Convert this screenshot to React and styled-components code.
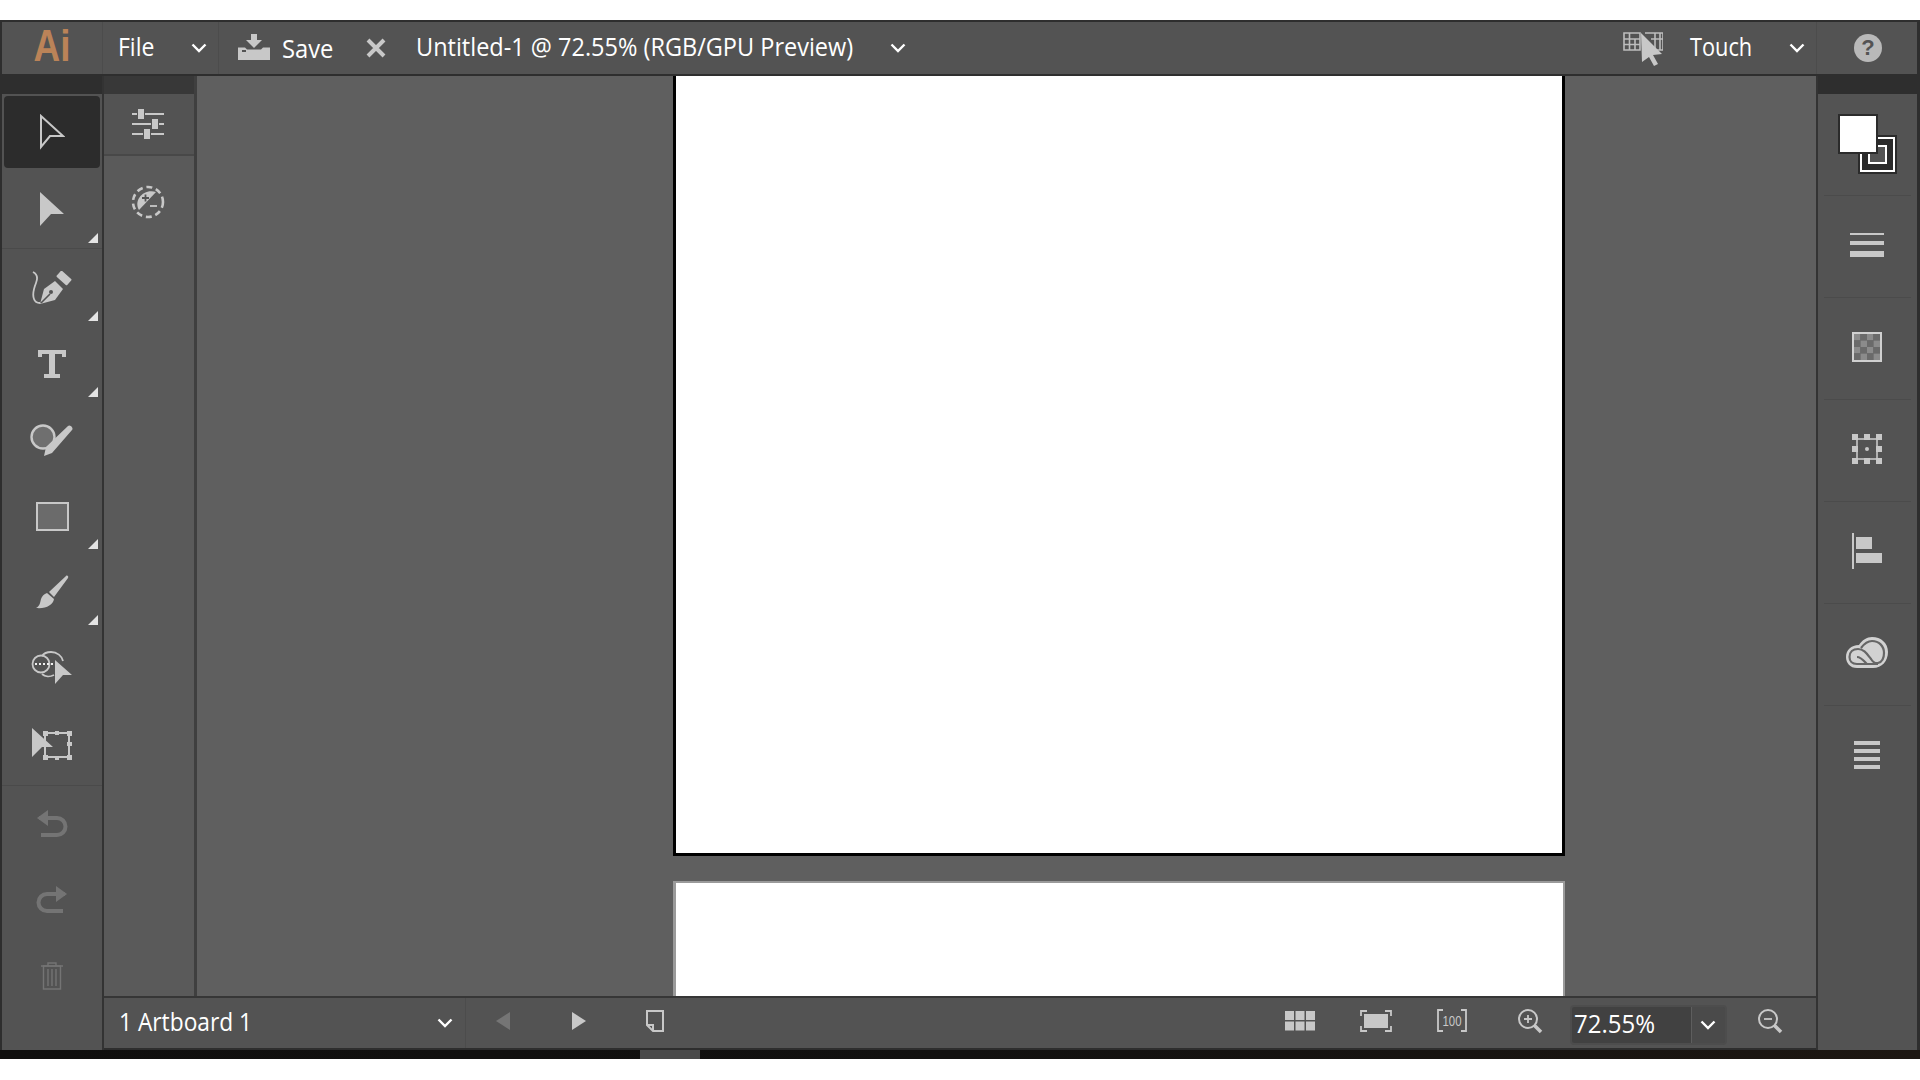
import styled, { createGlobalStyle } from "styled-components"

const light = "#c8c8c8"
const dim = "#747474"

const GlobalStyle = createGlobalStyle`
    html, body {
        margin : 0;
        padding : 0;
        background : #ffffff;
        overflow : hidden;
    }
    body {
        font-family : "Open Sans", "Noto Sans", sans-serif;
    }
`

const Page = styled.div`
    width : 1920px;
    height : 1080px;
    padding-top : 20px;
    box-sizing : border-box;
    background : #ffffff;
`
const Window = styled.div`
    display : grid;
    grid-template-columns : 104px 1fr 104px;
    grid-template-rows : 56px 974px 9px;
    height : 1039px;
    background : #2e2e2e;
`

/* top bar */
const TopBar = styled.header`
    grid-column : 1 / 4;
    display : flex;
    align-items : stretch;
    margin : 2px 3px 2px 2px;
    background : #535353;
    color : #ffffff;
`
const LogoCell = styled.div`
    width : 101px;
    display : flex;
    justify-content : center;
    align-items : center;
    border-right : 1px solid #4c4c4c;
    box-sizing : border-box;
    overflow : hidden;
`
const Logo = styled.span`
    font-family : "Liberation Sans", sans-serif;
    font-weight : 700;
    font-size : 44px;
    line-height : 1;
    color : #bb8358;
    transform : scaleX(.84);
    margin-top : -4px;
`
const Segment = styled.div`
    display : flex;
    align-items : center;
    width : ${props => props.width}px;
    padding-left : ${props => props.pad || 0}px;
    box-sizing : border-box;
    border-right : ${props => props.noline ? "none" : "1px solid #4c4c4c"};
    flex : ${props => props.grow ? "1" : "none"};
    position : relative;
`
const Label = styled.span`
    display : inline-block;
    font-size : 25px;
    line-height : 1;
    white-space : nowrap;
    color : #ffffff;
    transform : translateY(${props => props.raise || 0}px) scaleX(${props => props.squeeze || .85});
    transform-origin : left center;
    width : ${props => props.width}px;
    flex : none;
    margin-left : ${props => props.left || 0}px;
`
const Spacer = styled.div`
    flex : ${props => props.size ? "none" : "1"};
    width : ${props => props.size ? props.size + "px" : "auto"};
`
const HelpBadge = styled.div`
    width : 28px;
    height : 28px;
    border-radius : 50%;
    background : #b9b9b9;
    color : #535353;
    font-family : "Liberation Sans", sans-serif;
    font-weight : 700;
    font-size : 22px;
    line-height : 28px;
    text-align : center;
`
const Glyph = styled.svg`
    display : block;
    flex : none;
    margin-left : ${props => props.left || 0}px;
    margin-top : ${props => props.top || 0}px;
`

/* left tools */
const ToolColumn = styled.aside`
    grid-row : 2;
    display : flex;
    flex-direction : column;
    margin-left : 2px;
    background : #535353;
    border-right : 2px solid #333333;
    position : relative;
`
const DarkStrip = styled.div`
    height : 18px;
    flex : none;
    background : ${props => props.color || "#2e2e2e"};
`
const ToolGroup = styled.div`
    display : flex;
    flex-direction : column;
    padding-top : ${props => props.top || 0}px;
    border-bottom : ${props => props.line ? "1px solid #4a4a4a" : "none"};
`
const Tool = styled.div`
    height : ${props => props.height || 76}px;
    display : flex;
    justify-content : center;
    align-items : center;
    position : relative;
    box-sizing : border-box;
    &::before {
        content : "";
        display : ${props => props.active ? "block" : "none"};
        position : absolute;
        left : 2px;
        right : 2px;
        top : 2px;
        bottom : 2px;
        background : #2c2c2c;
        border-radius : 4px;
    }
    &::after {
        content : "";
        display : ${props => props.corner ? "block" : "none"};
        position : absolute;
        right : 4px;
        bottom : 5px;
        width : 0;
        height : 0;
        border-left : 10px solid transparent;
        border-bottom : 10px solid #e4e4e4;
    }
    svg {
        position : relative;
        z-index : 1;
    }
`

/* middle */
const Middle = styled.div`
    grid-row : 2;
    display : flex;
    flex-direction : column;
    min-width : 0;
`
const Work = styled.div`
    display : flex;
    height : 920px;
    flex : none;
`
const Panel = styled.div`
    width : 93px;
    flex : none;
    display : flex;
    flex-direction : column;
    background : #5a5a5a;
    border-right : 3px solid #3f3f3f;
    box-sizing : border-box;
`
const PanelCell = styled.div`
    height : ${props => props.height}px;
    display : flex;
    justify-content : center;
    align-items : center;
    flex : none;
    padding-right : 2px;
    background : ${props => props.bg || "transparent"};
    border-bottom : ${props => props.line ? "2px solid #484848" : "none"};
    box-sizing : border-box;
`
const Canvas = styled.main`
    flex : 1;
    display : flex;
    flex-direction : column;
    gap : 25px;
    padding-left : 476px;
    background : #5f5f5f;
    overflow : hidden;
`
const Artboard = styled.div`
    width : 892px;
    height : ${props => props.height}px;
    flex : none;
    box-sizing : border-box;
    background : #ffffff;
    border : 3px solid ${props => props.active ? "#000000" : "#9a9a9a"};
    border-width : ${props => props.active ? "0 3px 3px 3px" : "2px 2px 0 3px"};
`

/* status bar */
const StatusBar = styled.footer`
    height : 50px;
    flex : none;
    display : flex;
    align-items : stretch;
    border-top : 2px solid #363636;
    background : #535353;
    color : #ffffff;
`
const StatusIcons = styled.div`
    flex : 1;
    display : flex;
    align-items : center;
    position : relative;
`
const ZoomField = styled.div`
    display : flex;
    width : 157px;
    height : 40px;
    flex : none;
    margin-left : 27px;
    box-sizing : border-box;
    border : 2px solid #4d4d4d;
    border-radius : 4px;
    margin-top : 3px;
    background : #4a4a4a;
`
const ZoomValue = styled.div`
    width : 120px;
    flex : none;
    display : flex;
    align-items : center;
    padding-left : 2px;
    box-sizing : border-box;
    background : #414141;
    border-right : 1px solid #5e5e5e;
    border-radius : 3px 0 0 3px;
`
const ZoomArrow = styled.div`
    flex : 1;
    display : flex;
    justify-content : center;
    align-items : center;
    padding-right : 2px;
`

/* right dock */
const Dock = styled.aside`
    grid-row : 2;
    display : flex;
    flex-direction : column;
    background : #535353;
    border-left : 2px solid #333333;
    margin-right : 3px;
`
const DockRow = styled.div`
    height : 102px;
    flex : none;
    display : flex;
    justify-content : center;
    align-items : center;
    padding-bottom : 5px;
    padding-right : 2px;
    box-sizing : border-box;
    position : relative;
    &::after {
        content : "";
        display : ${props => props.noline ? "none" : "block"};
        position : absolute;
        left : 6px;
        right : 6px;
        bottom : 0;
        height : 1px;
        background : #4b4b4b;
    }
`
const ColorRow = styled(DockRow)`
    align-items : flex-start;
    padding : 20px 0 0 0;
`
const ColorStack = styled.div`
    position : relative;
    width : 60px;
    height : 62px;
    margin-left : 1px;
`
const FillSwatch = styled.div`
    position : absolute;
    left : 0;
    top : 0;
    width : 36px;
    height : 36px;
    background : #ffffff;
    border : 2px solid #2b2b2b;
    z-index : 1;
`
const StrokeSwatch = styled.div`
    position : absolute;
    left : 22px;
    top : 23px;
    width : 35px;
    height : 35px;
    box-sizing : border-box;
    border : 2px solid #ffffff;
    outline : 2px solid #2b2b2b;
    background : #2b2b2b;
    &::after {
        content : "";
        position : absolute;
        left : 6px;
        top : 6px;
        width : 19px;
        height : 19px;
        box-sizing : border-box;
        border : 2px solid #ffffff;
        background : #535353;
    }
`

/* bottom strip */
const BottomStrip = styled.div`
    grid-column : 1 / 4;
    grid-row : 3;
    display : flex;
    background : linear-gradient(90deg, #100f0e, #121110 50%, #1d1712);
`
const ScrollThumb = styled.div`
    width : 60px;
    margin-left : 640px;
    background : #4a4a4a;
`

function Chevron({ left, color = "#ffffff" }){
    return(
        <Glyph width="16" height="10" viewBox="0 0 16 10" left={left}>
            <polyline points="1.5,1.5 8,8 14.5,1.5" fill="none" stroke={color} strokeWidth="2.4"/>
        </Glyph>
    )
}

function SaveIcon(){
    return(
        <Glyph width="32" height="27" viewBox="0 0 32 27" left={19} top={-2}>
            <path d="M13 0h6v6h5l-8 8-8-8h5z" fill={light}/>
            <path d="M0 13.5h7l2 2h14l2-2h7V26H0z" fill={light}/>
            <rect x="4" y="16" width="4" height="2" fill="#535353"/>
        </Glyph>
    )
}

const tools = [
    {
        name : "select", active : true,
        icon : <svg width="26" height="36" viewBox="0 0 26 36"><path d="M2 2L24 22H11L2 33z" fill="none" stroke={light} strokeWidth="2"/></svg>
    },
    {
        name : "direct", corner : true, height : 78,
        icon : <svg width="26" height="36" viewBox="0 0 26 36"><path d="M1 1L25 23H12L1 35z" fill={light}/></svg>
    }
]

const tools2 = [
    {
        name : "pen", corner : true,
        icon : <svg width="40" height="34" viewBox="0 0 40 34">
            <path d="M1 1c4 2 5 6 3 11s-4 11-2 16c1 3 4 4 6 4" fill="none" stroke={light} strokeWidth="1.8"/>
            <path d="M8 33l4-15 11-8 8 8-8 11-15 4z" fill={light}/>
            <rect x="25" y="3" width="14" height="8" rx="1" transform="rotate(42 32 7)" fill={light}/>
            <path d="M9 32l9-9" stroke="#535353" strokeWidth="1.6"/>
            <circle cx="19" cy="21" r="2" fill="#535353"/>
        </svg>
    },
    {
        name : "type", corner : true,
        icon : <svg width="30" height="30" viewBox="0 0 30 30"><path d="M1 1h28v7h-4V5H18v20h5v4H7v-4h5V5H5v3H1z" fill={light}/></svg>
    },
    {
        name : "shaper",
        icon : <svg width="44" height="32" viewBox="0 0 44 32">
            <circle cx="13" cy="13" r="11.5" fill="#6f6f6f" stroke={light} strokeWidth="2.4"/>
            <path d="M16 23L38 2c2-2 6 2 4 4L22 29l-8 3z" fill={light}/>
        </svg>
    },
    {
        name : "rectangle", corner : true,
        icon : <svg width="33" height="29" viewBox="0 0 33 29"><rect x="1" y="1" width="31" height="27" fill="#6b6b6b" stroke={light} strokeWidth="2"/></svg>
    },
    {
        name : "brush", corner : true,
        icon : <svg width="34" height="34" viewBox="0 0 34 34">
            <path d="M14 17L31 1c1-1 3 0 2 2L19 22z" fill={light}/>
            <path d="M12 18l7 6c-1 6-8 10-18 9 4-2 4-5 5-9 1-3 3-5 6-6z" fill={light}/>
        </svg>
    },
    {
        name : "blend",
        icon : <svg width="42" height="34" viewBox="0 0 42 34">
            <circle cx="10" cy="13" r="8.500" fill="none" stroke={light} strokeWidth="1.8"/>
            <path d="M23 24c-4 2-9 2-12-1M11 5c2-3 6-4 9-4 6 0 11 4 12 9" fill="none" stroke={light} strokeWidth="1.8"/>
            <line x1="4" y1="13" x2="23" y2="13" stroke="#f0f0f0" strokeWidth="2" strokeDasharray="2 2"/>
            <path d="M24 9L41 24H32L24 33z" fill={light}/>
        </svg>
    },
    {
        name : "artboard",
        icon : <svg width="40" height="32" viewBox="0 0 40 32">
            <rect x="13" y="5" width="24" height="24" fill="none" stroke={light} strokeWidth="2"/>
            <path d="M11 3h5v5h-5zM23 3h4v4h-4zM35 3h5v5h-5zM35 14h5v4h-5zM11 27h5v5h-5zM23 28h4v4h-4zM35 27h5v5h-5z" fill={light}/>
            <path d="M0 0L21 19H10L0 29z" fill={light}/>
        </svg>
    }
]

const historyTools = [
    {
        name : "undo",
        icon : <svg width="32" height="28" viewBox="0 0 32 28"><path d="M3 8h18a8 8 0 0 1 0 17H5" fill="none" stroke={dim} strokeWidth="4"/><path d="M12 0v16L1 8z" fill={dim}/></svg>
    },
    {
        name : "redo",
        icon : <svg width="32" height="28" viewBox="0 0 32 28"><path d="M29 8H11a8 8 0 0 0 0 17h16" fill="none" stroke={dim} strokeWidth="4"/><path d="M20 0v16l11-8z" fill={dim}/></svg>
    },
    {
        name : "trash",
        icon : <svg width="22" height="28" viewBox="0 0 22 28" fill="none" stroke={dim} strokeWidth="1.4">
            <path d="M0 4h22M7 4V1h8v3"/>
            <path d="M2.5 4h17v23h-17zM7 7v17M11 7v17M15 7v17"/>
        </svg>
    }
]

function ToolButton({ tool }){
    return(
        <Tool active={tool.active} corner={tool.corner} height={tool.height}>
            {tool.icon}
        </Tool>
    )
}

function CheckerIcon(){
    const cells = []
    for(let row = 0; row < 4; row++){
        for(let col = 0; col < 4; col++){
            cells.push(
                <rect key={row + "-" + col} x={2 + col * 6.5} y={2 + row * 6.5} width="6.5" height="6.5"
                    fill={(row + col) % 2 ? "#6a6a6a" : "#8b8b8b"}/>
            )
        }
    }
    return(
        <svg width="30" height="30" viewBox="0 0 30 30">
            {cells}
            <rect x="1" y="1" width="28" height="28" fill="none" stroke="#d0d0d0" strokeWidth="2"/>
        </svg>
    )
}

function TransformIcon(){
    const points = [[0,0],[12,0],[24,0],[0,12],[24,12],[0,24],[12,24],[24,24]]
    return(
        <svg width="30" height="30" viewBox="0 0 30 30">
            <rect x="5" y="5" width="20" height="20" fill="none" stroke={light} strokeWidth="1.6"/>
            {points.map(p => <rect key={p.join()} x={p[0]} y={p[1]} width="6" height="6" fill={light}/>)}
            <circle cx="15" cy="15" r="2" fill={light}/>
        </svg>
    )
}

export default function App(){
    return(
        <Page>
            <GlobalStyle/>
            <Window>
                <TopBar>
                    <LogoCell><Logo>Ai</Logo></LogoCell>
                    <Segment width={116} pad={15}>
                        <Label width={73} squeeze={.92} raise={-2}>File</Label>
                        <Chevron/>
                    </Segment>
                    <Segment grow noline>
                        <SaveIcon/>
                        <Label width={50} left={12} squeeze={.95}>Save</Label>
                        <Glyph width="20" height="20" viewBox="0 0 20 20" left={34}>
                            <path d="M2 2l16 16M18 2L2 18" stroke={light} strokeWidth="4"/>
                        </Glyph>
                        <Label width={439} left={30} squeeze={.94} raise={-2}>Untitled-1 @ 72.55% (RGB/GPU Preview)</Label>
                        <Chevron left={35}/>
                        <Spacer/>
                        <Glyph width="40" height="34" viewBox="0 0 40 34" top={2}>
                            <path d="M1 1h16v17H1zM1 7h16M1 12.500h16M6.500 1v17M12 7v11M22 1h18v17H30M28 7h12M32 1v17M37 1v17" fill="none" stroke="#bdbdbd" strokeWidth="1.6"/>
                            <path d="M18 1l21 21-9 1 5 9-4 2-5-9-7 5z" fill={light}/>
                        </Glyph>
                        <Spacer size={11}/>
                    </Segment>
                    <Segment width={143} pad={14}>
                        <Label width={96} left={2} squeeze={.87} raise={-2}>Touch</Label>
                        <Chevron left={3}/>
                    </Segment>
                    <Segment width={100} pad={37} noline>
                        <HelpBadge>?</HelpBadge>
                    </Segment>
                </TopBar>

                <ToolColumn>
                    <DarkStrip/>
                    <ToolGroup line>
                        {tools.map(tool => <ToolButton key={tool.name} tool={tool}/>)}
                    </ToolGroup>
                    <ToolGroup top={1} line>
                        {tools2.map(tool => <ToolButton key={tool.name} tool={tool}/>)}
                        <Tool height={3}/>
                    </ToolGroup>
                    <ToolGroup>
                        {historyTools.map(tool => <ToolButton key={tool.name} tool={tool}/>)}
                    </ToolGroup>
                </ToolColumn>

                <Middle>
                    <Work>
                        <Panel>
                            <DarkStrip color="#383838"/>
                            <PanelCell height={62} bg="#535353" line>
                                <svg width="34" height="32" viewBox="0 0 34 32">
                                    <path d="M1 6h5M14 6h19M1 16h19M28 16h5M1 26h11M20 26h13" stroke={light} strokeWidth="2"/>
                                    <rect x="7" y="1" width="6" height="10" fill={light}/>
                                    <rect x="21" y="11" width="6" height="10" fill={light}/>
                                    <rect x="13" y="21" width="6" height="10" fill={light}/>
                                </svg>
                            </PanelCell>
                            <PanelCell height={92}>
                                <svg width="34" height="34" viewBox="0 0 34 34">
                                    <circle cx="17" cy="17" r="15" fill="none" stroke={light} strokeWidth="2.6" strokeDasharray="6 3.800"/>
                                    <path d="M25 7L8 25C2 15 13 3 25 7z" fill={light}/>
                                    <path d="M11 13h7M14.500 9.500v7" stroke="#535353" strokeWidth="1.800"/>
                                    <path d="M19 21h7" stroke={light} strokeWidth="1.800"/>
                                </svg>
                            </PanelCell>
                        </Panel>
                        <Canvas>
                            <Artboard active height={780}/>
                            <Artboard height={115}/>
                        </Canvas>
                    </Work>
                    <StatusBar>
                        <Segment width={362} pad={15}>
                            <Label width={322} squeeze={.91} raise={-2}>1 Artboard 1</Label>
                            <Chevron left={-4}/>
                        </Segment>
                        <StatusIcons>
                            <Glyph width="14" height="18" viewBox="0 0 14 18" left={30} top={-4}>
                                <path d="M14 0v18L0 9z" fill="#757575"/>
                            </Glyph>
                            <Glyph width="14" height="18" viewBox="0 0 14 18" left={62} top={-4}>
                                <path d="M0 0v18l14-9z" fill={light}/>
                            </Glyph>
                            <Glyph width="18" height="22" viewBox="0 0 18 22" left={60} top={-4}>
                                <path d="M1 1h16v20H7L1 15zM1 15h6v6" fill="none" stroke={light} strokeWidth="2"/>
                            </Glyph>
                            <Glyph width="30" height="20" viewBox="0 0 30 20" left={621} top={-4}>
                                <path d="M0 0h9v9H0zM10.500 0h9v9h-9zM21 0h9v9h-9zM0 10.500h9v9H0zM10.500 10.500h9v9h-9zM21 10.500h9v9h-9z" fill={light}/>
                            </Glyph>
                            <Glyph width="32" height="22" viewBox="0 0 32 22" left={45} top={-4}>
                                <path d="M1 6V1h6M25 1h6v5M1 16v5h6M25 21h6v-5" fill="none" stroke={light} strokeWidth="1.800"/>
                                <rect x="4" y="4" width="24" height="14" fill={light}/>
                            </Glyph>
                            <Glyph width="32" height="24" viewBox="0 0 32 24" left={44} top={-4}>
                                <path d="M7 1H2v21h5M25 1h5v21h-5" fill="none" stroke={light} strokeWidth="1.800"/>
                                <text x="16" y="17" fontFamily="Liberation Sans, sans-serif" fontSize="15" textLength="19" lengthAdjust="spacingAndGlyphs" textAnchor="middle" fill={light}>100</text>
                            </Glyph>
                            <Glyph width="26" height="26" viewBox="0 0 26 26" left={49} top={-4}>
                                <circle cx="11" cy="11" r="9" fill="none" stroke={light} strokeWidth="2"/>
                                <path d="M17 17l7 7" stroke={light} strokeWidth="3.500"/>
                                <path d="M7 11h8M11 7v8" stroke={light} strokeWidth="1.800"/>
                            </Glyph>
                            <ZoomField>
                                <ZoomValue><Label width={90} squeeze={.96} raise={-1}>72.55%</Label></ZoomValue>
                                <ZoomArrow><Chevron/></ZoomArrow>
                            </ZoomField>
                            <Glyph width="26" height="26" viewBox="0 0 26 26" left={30} top={-4}>
                                <circle cx="11" cy="11" r="9" fill="none" stroke={light} strokeWidth="2"/>
                                <path d="M17 17l7 7" stroke={light} strokeWidth="3.500"/>
                                <path d="M7 11h8" stroke={light} strokeWidth="1.800"/>
                            </Glyph>
                        </StatusIcons>
                    </StatusBar>
                </Middle>

                <Dock>
                    <DarkStrip/>
                    <ColorRow>
                        <ColorStack>
                            <FillSwatch/>
                            <StrokeSwatch/>
                        </ColorStack>
                    </ColorRow>
                    <DockRow>
                        <svg width="34" height="24" viewBox="0 0 34 24">
                            <path d="M0 0h34v2H0zM0 8h34v4H0zM0 18h34v6H0z" fill={light}/>
                        </svg>
                    </DockRow>
                    <DockRow><CheckerIcon/></DockRow>
                    <DockRow><TransformIcon/></DockRow>
                    <DockRow>
                        <svg width="30" height="36" viewBox="0 0 30 36">
                            <path d="M0 0h2v36H0zM4 4h16v12H4zM4 20h26v10H4z" fill={light}/>
                        </svg>
                    </DockRow>
                    <DockRow>
                        <svg width="42" height="31" viewBox="0 0 42 31">
                            <path d="M11 31C4 31 0 26 0 20 0 13 5 8 13 8c3-5 8-8 13-8 9 0 16 6 16 15 0 9-6 16-15 16z" fill="#d2d2d2"/>
                            <path d="M13 27H11C6 27 3.500 24 3.500 20 3.500 15 7 12 12 12c6 0 9 5 13 10 2 3 4 5 7 4 4-1 6-5 6-10 0-7-5-12-12-12-5 0-8 3-11 7" fill="none" stroke="#666666" strokeWidth="2.200"/>
                            <path d="M11 27h21M11 20c4 0 7 4 10 7" fill="none" stroke="#666666" strokeWidth="2.200"/>
                        </svg>
                    </DockRow>
                    <DockRow noline>
                        <svg width="26" height="28" viewBox="0 0 26 28">
                            <path d="M0 0h26v4H0zM0 8h26v4H0zM0 16h26v4H0zM0 24h26v4H0z" fill={light}/>
                        </svg>
                    </DockRow>
                </Dock>

                <BottomStrip><ScrollThumb/></BottomStrip>
            </Window>
        </Page>
    )
}
